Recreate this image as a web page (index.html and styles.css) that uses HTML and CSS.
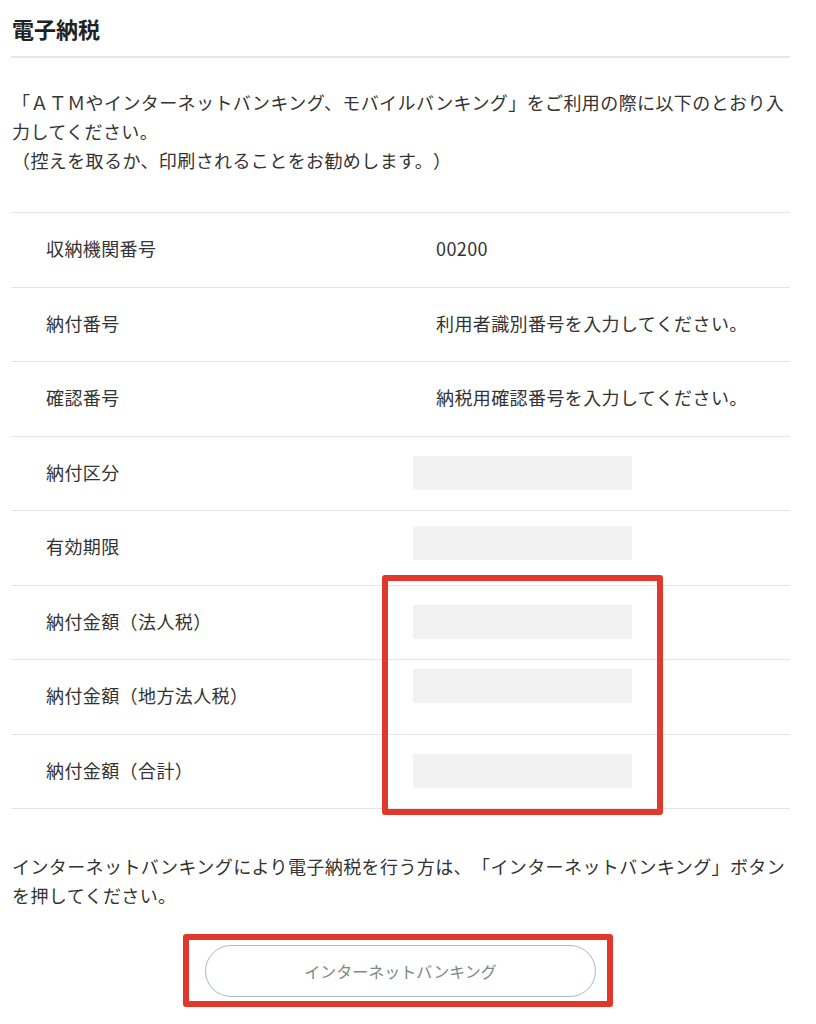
FILE: index.html
```html
<!DOCTYPE html>
<html lang="ja">
<head>
  <meta charset="UTF-8" />
  <meta name="viewport" content="width=device-width, initial-scale=1.0"/>
  <title>電子納税</title>
  <link rel="stylesheet" href="styles.css">
</head>
<body>
  <div class="page">
    <h1>電子納税</h1>

    <p class="lead">「ＡＴＭやインターネットバンキング、モバイルバンキング」をご利用の際に以下のとおり入力してください。<br>（控えを取るか、印刷されることをお勧めします。）</p>

    <div class="table">
      <div class="row">
        <div class="label">収納機関番号</div>
        <div class="value">00200</div>
      </div>
      <div class="row">
        <div class="label">納付番号</div>
        <div class="value">利用者識別番号を入力してください。</div>
      </div>
      <div class="row">
        <div class="label">確認番号</div>
        <div class="value">納税用確認番号を入力してください。</div>
      </div>
      <div class="row">
        <div class="label">納付区分</div>
        <div class="mask"></div>
      </div>
      <div class="row">
        <div class="label">有効期限</div>
        <div class="mask mask-up"></div>
      </div>
      <div class="row">
        <div class="label">納付金額（法人税）</div>
        <div class="mask"></div>
      </div>
      <div class="row">
        <div class="label">納付金額（地方法人税）</div>
        <div class="mask mask-high"></div>
      </div>
      <div class="row">
        <div class="label">納付金額（合計）</div>
        <div class="mask"></div>
      </div>

      <!-- annotation frame over the amount cells -->
      <div class="mark mark-table"></div>
    </div>

    <p class="note">インターネットバンキングにより電子納税を行う方は、「インターネットバンキング」ボタンを押してください。</p>

    <div class="btn-area">
      <button class="btn">インターネットバンキング</button>
      <div class="mark mark-btn"></div>
    </div>
  </div>
</body>
</html>
```

FILE: styles.css
```css
:root {
  --text: #333333;
  --title: #222222;
  --line: #e6e6e6;
  --title-line: #e3e8e7;
  --mask: #f2f2f2;
  --mark: #e0392b;
  --btn-border: #a8bdb6;
  --btn-text: #7b8b86;
}

* {
  box-sizing: border-box;
  margin: 0;
  padding: 0;
}

body {
  font-family: "Noto Sans CJK JP", "Noto Sans", sans-serif;
  color: var(--text);
  background: #ffffff;
  text-spacing-trim: space-all;
}

.page {
  width: 779px;
  margin-left: 11px;
  padding-top: 12px;
  padding-bottom: 28px;
}

h1 {
  font-size: 22px;
  font-weight: 700;
  line-height: 32px;
  color: var(--title);
  padding-left: 1px;
  padding-bottom: 12px;
  border-bottom: 2px solid var(--title-line);
}

.lead,
.note {
  font-size: 18px;
  line-height: 29px;
  letter-spacing: 0.4px;
  padding-left: 1px;
}

.lead {
  margin-top: 29.5px;
}

.table {
  position: relative;
  margin-top: 37.5px;
  border-top: 1px solid var(--line);
}

.row {
  display: grid;
  grid-template-columns: 402px 1fr;
  align-items: center;
  height: 74.5px;
  border-bottom: 1px solid var(--line);
  font-size: 18px;
  letter-spacing: 0.4px;
}

.label {
  padding-left: 35px;
  padding-bottom: 3px;
}

.value {
  padding-left: 23px;
  padding-bottom: 3px;
}

.mask {
  width: 219px;
  height: 34px;
  background: var(--mask);
}

.mask-up {
  margin-bottom: 10px;
}

.mask-high {
  margin-bottom: 22px;
}

.note {
  margin-top: 42.5px;
}

.btn-area {
  position: relative;
  margin-top: 35px;
  display: flex;
  justify-content: center;
}

.btn {
  width: 391px;
  height: 52px;
  border: 1px solid var(--btn-border);
  border-radius: 26px;
  background: #ffffff;
  color: var(--btn-text);
  font-family: inherit;
  font-size: 16px;
  cursor: pointer;
}

.mark {
  position: absolute;
  border: 6px solid var(--mark);
  border-radius: 3px;
  pointer-events: none;
}

.mark-table {
  left: 371px;
  top: 362px;
  width: 281px;
  height: 240px;
}

.mark-btn {
  left: 172px;
  top: -11px;
  width: 430px;
  height: 73px;
}
```
